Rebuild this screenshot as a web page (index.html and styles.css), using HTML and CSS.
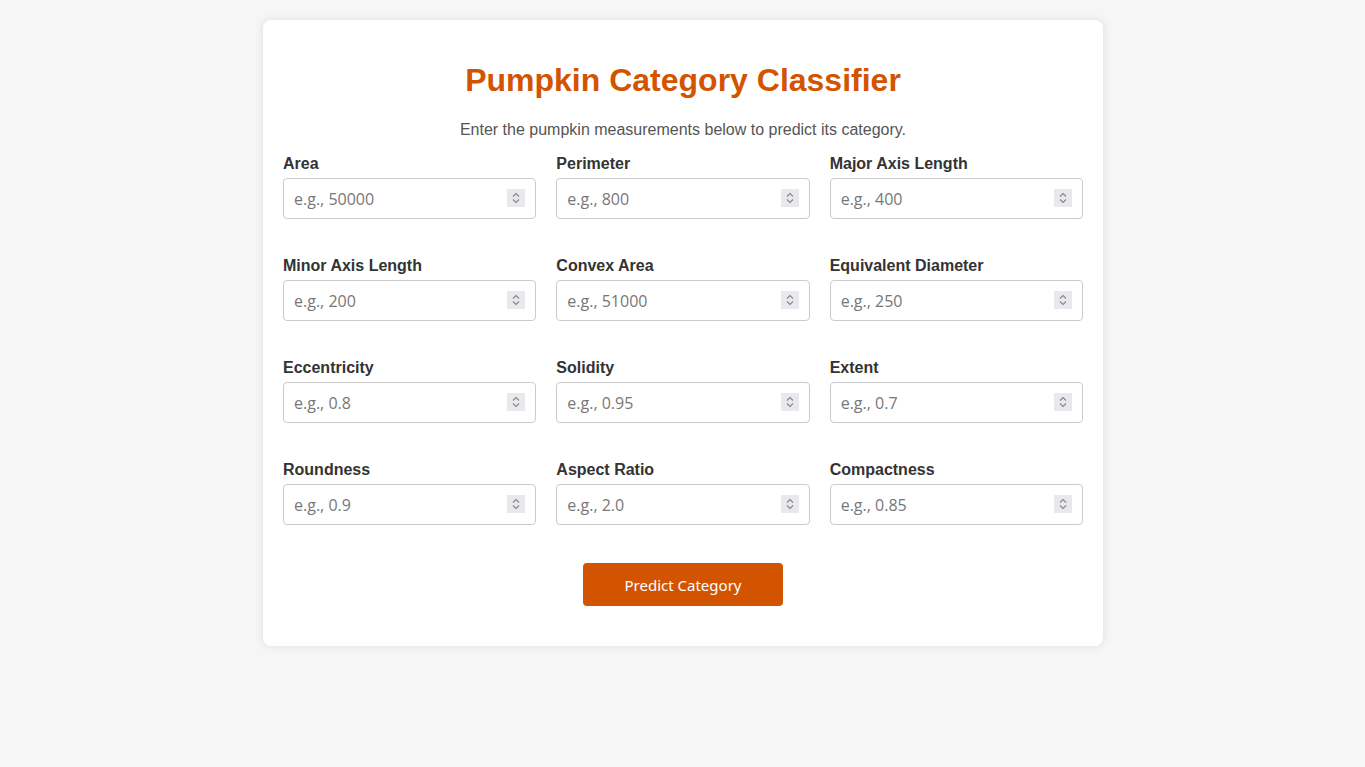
FILE: index.html
```html
<!DOCTYPE html>
<html lang="en">
<head>
<meta charset="utf-8">
<title>Pumpkin Category Classifier</title>
<link rel="stylesheet" href="styles.css">
</head>
<body>
<main class="card">
  <h1 class="title">Pumpkin Category Classifier</h1>
  <p class="subtitle">Enter the pumpkin measurements below to predict its category.</p>
  <form class="form">
    <div class="grid">
      <div class="field"><label>Area</label><div class="input-wrap"><input type="text" placeholder="e.g., 50000"><span class="spin"><svg viewBox="0 0 16 16"><path d="M5 6.5 8 3.5l3 3M5 9.5 8 12.5l3-3"/></svg></span></div></div>
      <div class="field"><label>Perimeter</label><div class="input-wrap"><input type="text" placeholder="e.g., 800"><span class="spin"><svg viewBox="0 0 16 16"><path d="M5 6.5 8 3.5l3 3M5 9.5 8 12.5l3-3"/></svg></span></div></div>
      <div class="field"><label>Major Axis Length</label><div class="input-wrap"><input type="text" placeholder="e.g., 400"><span class="spin"><svg viewBox="0 0 16 16"><path d="M5 6.5 8 3.5l3 3M5 9.5 8 12.5l3-3"/></svg></span></div></div>
      <div class="field"><label>Minor Axis Length</label><div class="input-wrap"><input type="text" placeholder="e.g., 200"><span class="spin"><svg viewBox="0 0 16 16"><path d="M5 6.5 8 3.5l3 3M5 9.5 8 12.5l3-3"/></svg></span></div></div>
      <div class="field"><label>Convex Area</label><div class="input-wrap"><input type="text" placeholder="e.g., 51000"><span class="spin"><svg viewBox="0 0 16 16"><path d="M5 6.5 8 3.5l3 3M5 9.5 8 12.5l3-3"/></svg></span></div></div>
      <div class="field"><label>Equivalent Diameter</label><div class="input-wrap"><input type="text" placeholder="e.g., 250"><span class="spin"><svg viewBox="0 0 16 16"><path d="M5 6.5 8 3.5l3 3M5 9.5 8 12.5l3-3"/></svg></span></div></div>
      <div class="field"><label>Eccentricity</label><div class="input-wrap"><input type="text" placeholder="e.g., 0.8"><span class="spin"><svg viewBox="0 0 16 16"><path d="M5 6.5 8 3.5l3 3M5 9.5 8 12.5l3-3"/></svg></span></div></div>
      <div class="field"><label>Solidity</label><div class="input-wrap"><input type="text" placeholder="e.g., 0.95"><span class="spin"><svg viewBox="0 0 16 16"><path d="M5 6.5 8 3.5l3 3M5 9.5 8 12.5l3-3"/></svg></span></div></div>
      <div class="field"><label>Extent</label><div class="input-wrap"><input type="text" placeholder="e.g., 0.7"><span class="spin"><svg viewBox="0 0 16 16"><path d="M5 6.5 8 3.5l3 3M5 9.5 8 12.5l3-3"/></svg></span></div></div>
      <div class="field"><label>Roundness</label><div class="input-wrap"><input type="text" placeholder="e.g., 0.9"><span class="spin"><svg viewBox="0 0 16 16"><path d="M5 6.5 8 3.5l3 3M5 9.5 8 12.5l3-3"/></svg></span></div></div>
      <div class="field"><label>Aspect Ratio</label><div class="input-wrap"><input type="text" placeholder="e.g., 2.0"><span class="spin"><svg viewBox="0 0 16 16"><path d="M5 6.5 8 3.5l3 3M5 9.5 8 12.5l3-3"/></svg></span></div></div>
      <div class="field"><label>Compactness</label><div class="input-wrap"><input type="text" placeholder="e.g., 0.85"><span class="spin"><svg viewBox="0 0 16 16"><path d="M5 6.5 8 3.5l3 3M5 9.5 8 12.5l3-3"/></svg></span></div></div>
    </div>
    <div class="actions"><button type="button" class="btn">Predict Category</button></div>
  </form>
</main>
</body>
</html>
```
FILE: styles.css
```css
html, body {
  margin: 0;
  padding: 0;
}
body {
  background: #f6f6f6;
  font-family: "Liberation Sans", Arial, sans-serif;
  padding: 20px 0 20px 1px;
}
.card {
  width: 800px;
  margin: 0 auto;
  background: #fff;
  padding: 20px;
  border-radius: 8px;
  box-shadow: 0 0 10px rgba(0, 0, 0, 0.1);
}
.title {
  color: #d35400;
  text-align: center;
  font-size: 32px;
  font-weight: bold;
  margin: 22px 0 22px;
  line-height: 37px;
}
.subtitle {
  text-align: center;
  color: #555;
  font-size: 16px;
  line-height: 18px;
  margin: 0 0 16px;
}
.grid {
  display: grid;
  grid-template-columns: repeat(3, 1fr);
  column-gap: 20px;
  row-gap: 38px;
}
.field label {
  display: block;
  font-weight: bold;
  color: #333;
  font-size: 16px;
  line-height: 18px;
  margin-bottom: 5px;
}
.input-wrap {
  position: relative;
}
.input-wrap input {
  display: block;
  width: 100%;
  box-sizing: border-box;
  height: 41px;
  padding: 10px;
  border: 1px solid #ccc;
  border-radius: 4px;
  font-family: "Open Sans", "Noto Sans", sans-serif;
  font-size: 16px;
  color: #333;
  background: #fff;
  outline: none;
}
.input-wrap input::placeholder {
  color: #777;
}
.spin {
  position: absolute;
  right: 11px;
  top: 11px;
  width: 18px;
  height: 18px;
  background: #e9e9ed;
  display: flex;
  align-items: center;
  justify-content: center;
}
.spin svg {
  width: 16px;
  height: 16px;
  fill: none;
  stroke: #85858a;
  stroke-width: 1.1;
}
.actions {
  display: flex;
  justify-content: center;
  margin-top: 38px;
  padding-bottom: 20px;
}
.btn {
  width: 200px;
  height: 43px;
  background: #d35400;
  color: #fff;
  border: none;
  border-radius: 4px;
  font-family: "Noto Sans", "Open Sans", sans-serif;
  font-size: 15px;
}
```
